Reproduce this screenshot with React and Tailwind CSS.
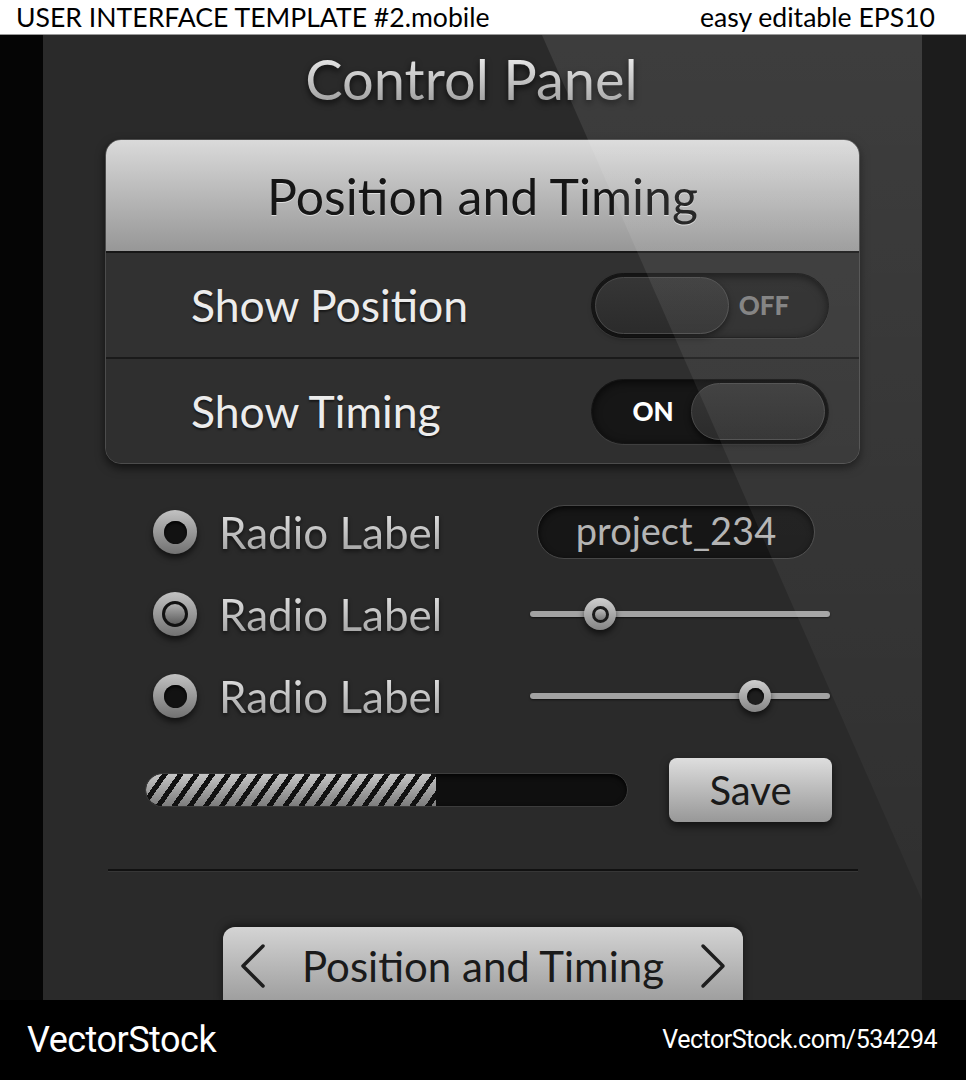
import React from 'react';

const font = { fontFamily: 'Lato, "Open Sans", sans-serif' };

const Toggle = ({ on }) => (
  <div
    className={`flex items-center w-[238px] h-[65px] rounded-full border border-[#141414] p-[3px] shadow-[0_1px_0_rgba(255,255,255,0.08),inset_0_2px_8px_rgba(0,0,0,0.7)] ${on ? 'bg-[#161616]' : 'bg-[#262626]'}`}
  >
    {on && <div className="flex-1 text-center text-white font-black text-[26px] leading-none pl-[20px]">ON</div>}
    <div className="w-[134px] h-full rounded-full border border-[#4a4a4a] bg-linear-to-b from-[#363636] to-[#2b2b2b] shadow-[0_3px_6px_rgba(0,0,0,0.65)]" />
    {!on && <div className="flex-1 text-center text-[#7c7c7c] font-black text-[26px] leading-none pr-[26px]">OFF</div>}
  </div>
);

const Radio = ({ checked }) => (
  <div className="w-[44px] h-[44px] shrink-0 rounded-full bg-linear-to-b from-[#c2c2c2] to-[#727272] flex items-center justify-center shadow-[0_4px_6px_rgba(0,0,0,0.6)]">
    {checked ? (
      <div className="w-[26px] h-[26px] rounded-full border-[3px] border-[#111] bg-linear-to-b from-[#b0b0b0] to-[#5e5e5e]" />
    ) : (
      <div className="w-[23px] h-[23px] rounded-full bg-[#121212] shadow-[inset_0_2px_3px_rgba(0,0,0,0.9)]" />
    )}
  </div>
);

const Slider = ({ left, dot }) => (
  <div className="relative w-[300px] h-[34px] flex items-center">
    <div className="w-full h-[6px] rounded-full bg-[#a2a2a2] shadow-[0_1px_2px_rgba(0,0,0,0.6)]" />
    <div
      className="absolute top-[1px] w-[32px] h-[32px] rounded-full bg-linear-to-b from-[#cfcfcf] to-[#858585] flex items-center justify-center shadow-[0_4px_6px_rgba(0,0,0,0.6)]"
      style={{ left }}
    >
      {dot ? (
        <div className="w-[17px] h-[17px] rounded-full border-[3px] border-[#1a1a1a] bg-linear-to-b from-[#bdbdbd] to-[#777]" />
      ) : (
        <div className="w-[17px] h-[17px] rounded-full bg-[#1e1e1e] shadow-[inset_0_2px_3px_rgba(0,0,0,0.9)]" />
      )}
    </div>
  </div>
);

const RadioText = ({ children }) => (
  <span className="text-[44px] leading-none bg-linear-to-b from-[#e4e4e4] to-[#a2a2a2] bg-clip-text text-transparent drop-shadow-[0_2px_2px_rgba(0,0,0,0.6)]">
    {children}
  </span>
);

export default function App() {
  const rows = [
    { checked: false, right: 'input' },
    { checked: true, right: 'slider1' },
    { checked: false, right: 'slider2' },
  ];

  return (
    <div className="w-full min-h-[1080px] bg-black" style={font}>
      {/* top caption */}
      <div className="h-[35px] bg-white border-b border-[#9a9a9a] flex items-center justify-between pl-[16px] pr-[31px] text-black text-[26.6px] leading-none">
        <span>USER INTERFACE TEMPLATE #2.mobile</span>
        <span>easy editable EPS10</span>
      </div>

      <div className="flex h-[965px]">
        <div className="w-[43px] bg-[#050505]" />
        <div className="relative flex-1 bg-[#2a2a2a] overflow-hidden flex flex-col">
          <div className="mt-[16px] h-[56px] shrink-0 flex justify-center pr-[22px]">
            <span className="text-[56px] leading-none bg-linear-to-b from-[#f2f2f2] to-[#9a9a9a] bg-clip-text text-transparent drop-shadow-[0_3px_3px_rgba(0,0,0,0.7)]">
              Control Panel
            </span>
          </div>

          {/* settings card */}
          <div className="mt-[32px] mx-[62px] h-[325px] shrink-0 rounded-[16px] border border-[#4c4c4c] bg-[#303030] overflow-hidden shadow-[0_4px_10px_rgba(0,0,0,0.6)] flex flex-col">
            <div className="h-[113px] shrink-0 bg-linear-to-b from-[#dadada] to-[#979797] border-b-2 border-[#161616] flex items-center justify-center">
              <span className="text-[50px] leading-none text-[#161616] [text-shadow:0_1px_0_rgba(255,255,255,0.55)]">Position and Timing</span>
            </div>
            <div className="flex-1 flex items-center justify-between pl-[85px] pr-[30px] border-b-2 border-[#1a1a1a] bg-[#313131]">
              <span className="text-[44.5px] leading-none text-[#ececec] [text-shadow:0_2px_2px_rgba(0,0,0,0.5)]">Show Position</span>
              <Toggle on={false} />
            </div>
            <div className="flex-1 flex items-center justify-between pl-[85px] pr-[30px] bg-[#2f2f2f]">
              <span className="text-[44.5px] leading-none text-[#ececec] [text-shadow:0_2px_2px_rgba(0,0,0,0.5)]">Show Timing</span>
              <Toggle on />
            </div>
          </div>

          {/* radios + controls */}
          <div className="pt-[27px] shrink-0 flex flex-col">
            {rows.map((r, i) => (
              <div key={i} className="h-[82px] flex items-center pl-[110px]">
                <div className="w-[377px] flex items-center gap-[22px]">
                  <Radio checked={r.checked} />
                  <RadioText>Radio Label</RadioText>
                </div>
                {r.right === 'input' && (
                  <div className="ml-[7px] w-[278px] h-[54px] rounded-full border border-[#474747] bg-[#161616] shadow-[inset_0_2px_6px_rgba(0,0,0,0.8)] flex items-center justify-center">
                    <span className="text-[38px] leading-none text-[#b4b4b4] pb-[4px]">project_234</span>
                  </div>
                )}
                {r.right === 'slider1' && <Slider left={54} dot />}
                {r.right === 'slider2' && <Slider left={209} />}
              </div>
            ))}
          </div>

          {/* progress + save */}
          <div className="mt-[21px] h-[64px] shrink-0 flex items-center pl-[102px] gap-[41px]">
            <div className="w-[483px] h-[34px] rounded-full border border-[#3c3c3c] bg-[#0f0f0f] overflow-hidden shadow-[inset_0_2px_5px_rgba(0,0,0,0.9)]">
              <div className="w-[290px] h-full rounded-l-full [background-image:repeating-linear-gradient(125deg,#111_0px,#111_5px,transparent_5px,transparent_13px),linear-gradient(#c6c6c6,#7c7c7c)]" />
            </div>
            <div className="w-[163px] h-[64px] rounded-[8px] bg-linear-to-b from-[#dedede] to-[#989898] shadow-[0_4px_8px_rgba(0,0,0,0.6)] flex items-center justify-center">
              <span className="text-[40px] leading-none text-[#1a1a1a]">Save</span>
            </div>
          </div>

          {/* divider */}
          <div className="mt-[47px] ml-[65px] mr-[64px] shrink-0 border-t-2 border-[#111] border-b border-b-[#363636]" />

          {/* bottom nav */}
          <div className="mt-[55px] ml-[180px] w-[520px] h-[80px] shrink-0 rounded-t-[12px] bg-linear-to-b from-[#d4d4d4] to-[#9a9a9a] shadow-[0_-2px_8px_rgba(0,0,0,0.5)] flex items-start pt-[16px] pl-[16px] pr-[16px] justify-between">
            <svg width="28" height="46" viewBox="0 0 28 46" fill="none" stroke="#1e1e1e" strokeWidth="3.5" strokeLinecap="round" strokeLinejoin="round">
              <path d="M24 3 L4 23 L24 43" />
            </svg>
            <span className="text-[42px] leading-none text-[#1a1a1a] pt-[2px]">Position and Timing</span>
            <svg width="28" height="46" viewBox="0 0 28 46" fill="none" stroke="#1e1e1e" strokeWidth="3.5" strokeLinecap="round" strokeLinejoin="round">
              <path d="M4 3 L24 23 L4 43" />
            </svg>
          </div>

          {/* gloss */}
          <div className="absolute inset-0 pointer-events-none [clip-path:polygon(499px_0,879px_0,879px_865px)] bg-linear-to-b from-[rgba(255,255,255,0.09)] to-[rgba(255,255,255,0.02)]" />
        </div>
        <div className="w-[44px] bg-[#1c1c1c]" />
      </div>

      {/* footer */}
      <div className="h-[80px] bg-black flex items-center justify-between pl-[27px] pr-[29px] text-white" style={{ fontFamily: 'Roboto, "Liberation Sans", sans-serif' }}>
        <span className="text-[36px] tracking-[-0.5px]">VectorStock</span>
        <span className="text-[25px] tracking-[-0.5px]">VectorStock.com/534294</span>
      </div>
    </div>
  );
}
